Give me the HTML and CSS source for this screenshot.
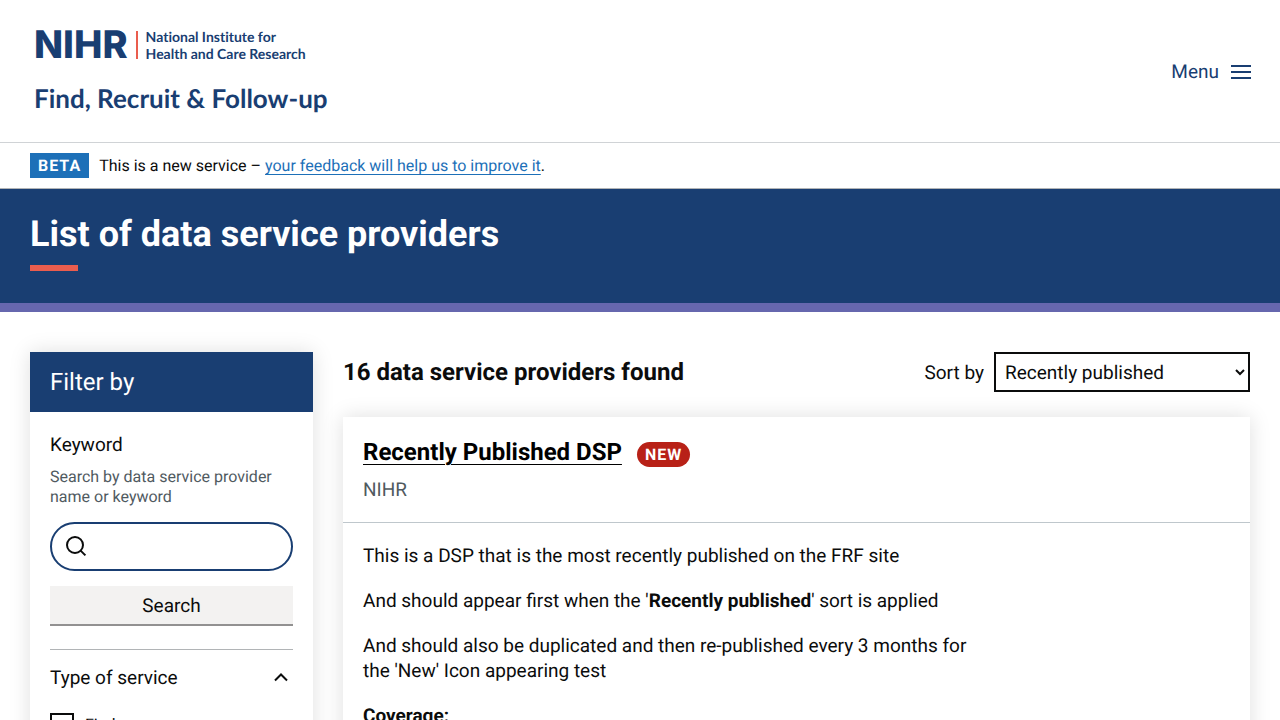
FILE: index.html
```html
<!DOCTYPE html>
<html lang="en">
<head>
<meta charset="utf-8">
<meta name="viewport" content="width=device-width, initial-scale=1">
<title>List of data service providers</title>
<link rel="stylesheet" href="styles.css">
</head>
<body>
<header class="header">
  <div class="brand">
    <div class="logo">
      <span class="logo-mark">NIHR</span>
      <span class="logo-rule"></span>
      <span class="logo-name">National Institute for<br>Health and Care Research</span>
    </div>
    <div class="service-name">Find, Recruit &amp; Follow-up</div>
  </div>
  <button class="menu-button" type="button">Menu
    <svg class="menu-icon" viewBox="0 0 20 14" width="20" height="14" aria-hidden="true"><path d="M0 1h20M0 7h20M0 13h20" stroke="currentColor" stroke-width="2"/></svg>
  </button>
</header>
<div class="phase-banner">
  <strong class="tag">BETA</strong>
  <span>This is a new service – <a class="link" href="#feedback">your feedback will help us to improve it</a>.</span>
</div>
<div class="hero">
  <h1 class="hero-title">List of data service providers</h1>
</div>
<main class="layout">
  <form class="filter">
    <h2 class="filter-title">Filter by</h2>
    <div class="filter-body">
      <label class="filter-label" for="keyword">Keyword</label>
      <p class="hint" id="keyword-hint">Search by data service provider name or keyword</p>
      <div class="search-box">
        <svg class="search-icon" viewBox="0 0 22 22" width="22" height="22" aria-hidden="true"><g fill="none" stroke="currentColor" stroke-width="2"><circle cx="9" cy="9" r="8"/><path d="M14.6 14.6l4.8 4.8"/></g></svg>
        <input class="search-input" id="keyword" type="text" aria-describedby="keyword-hint">
      </div>
      <button class="search-button" type="button">Search</button>
      <button class="section-toggle" type="button" aria-expanded="true">Type of service
        <svg viewBox="0 0 14 10" width="14" height="10" aria-hidden="true"><path d="M1 7.5l6-6 6 6" fill="none" stroke="currentColor" stroke-width="2"/></svg>
      </button>
      <div class="option">
        <input class="checkbox" type="checkbox" id="type-find">
        <label for="type-find">Find</label>
      </div>
    </div>
  </form>
  <section class="results">
    <div class="results-head">
      <h2 class="results-count">16 data service providers found</h2>
      <div class="sort">
        <label for="sort">Sort by</label>
        <select class="sort-select" id="sort"><option>Recently published</option></select>
      </div>
    </div>
    <article class="card">
      <div class="card-head">
        <div class="card-heading">
          <h3 class="card-title"><a class="card-link" href="#dsp">Recently Published DSP</a></h3>
          <strong class="badge">NEW</strong>
        </div>
        <p class="card-org">NIHR</p>
      </div>
      <div class="card-body">
        <p>This is a DSP that is the most recently published on the FRF site</p>
        <p>And should appear first when the '<strong>Recently published</strong>' sort is applied</p>
        <p>And should also be duplicated and then re-published every 3 months for the 'New' Icon appearing test</p>
        <p><strong>Coverage:</strong></p>
      </div>
    </article>
  </section>
</main>
</body>
</html>
```

FILE: styles.css
```css
*, *::before, *::after { box-sizing: border-box; }
body, h1, h2, h3, p { margin: 0; }
body {
  font-family: Roboto, "Liberation Sans", sans-serif;
  font-size: 19px;
  line-height: 25px;
  color: #0b0c0c;
  background: #fff;
  text-rendering: geometricPrecision;
}
button, input, select { font: inherit; color: inherit; text-rendering: inherit; }

.header {
  display: flex;
  justify-content: space-between;
  align-items: center;
  padding: 25px 29px 27px 34px;
  border-bottom: 1px solid #d0d3d6;
  color: #193e72;
}
.brand {
  display: grid;
  gap: 16px;
  font-family: Lato, sans-serif;
  font-weight: 700;
  font-variant-ligatures: none;
}
.logo { display: flex; align-items: center; }
.logo-mark {
  font-family: Inter, sans-serif;
  font-size: 38px;
  font-weight: 800;
  line-height: 40px;
}
.logo-rule { width: 2px; height: 28px; margin: 0 8px; background: #ea5d4e; }
.logo-name { font-size: 14px; line-height: 17px; }
.service-name { font-size: 26px; line-height: 34px; }
.menu-button {
  display: flex;
  align-items: center;
  gap: 12px;
  padding: 3px 0 0;
  border: 0;
  background: none;
}
.menu-icon { display: block; }

.phase-banner {
  display: flex;
  align-items: center;
  gap: 10px;
  padding: 10px 30px;
  border-bottom: 1px solid #b1b4b6;
  font-size: 16px;
}
.tag, .badge {
  padding: 0 8px;
  color: #fff;
  font-size: 16px;
  letter-spacing: 1px;
}
.tag { background: #1d70b8; }
.link {
  color: #1d70b8;
  text-decoration-thickness: 1px;
  text-underline-offset: 3px;
}

.hero {
  padding: 24px 30px 32px;
  border-bottom: 9px solid #6667ae;
  background: #193e72;
  color: #fff;
}
.hero-title { font-size: 36px; line-height: 42px; }
.hero-title::after {
  content: "";
  display: block;
  width: 48px;
  height: 6px;
  margin-top: 10px;
  background: #ea5d4e;
}

.layout {
  display: grid;
  grid-template-columns: 283px 1fr;
  gap: 30px;
  padding: 40px 30px;
}
.filter, .card { box-shadow: 0 0 20px rgba(0, 0, 0, 0.13); }
.filter-title {
  padding: 15px 20px;
  background: #193e72;
  color: #fff;
  font-size: 24px;
  font-weight: 400;
  line-height: 30px;
}
.filter-body { padding: 20px; }
.filter-label { display: block; margin-bottom: 10px; }
.hint {
  margin-bottom: 15px;
  color: #505a5f;
  font-size: 16px;
  line-height: 20px;
}
.search-box {
  display: flex;
  align-items: center;
  height: 49px;
  padding: 0 14px;
  border: 2px solid #193e72;
  border-radius: 25px;
}
.search-icon { flex: none; }
.search-input {
  flex: 1;
  min-width: 0;
  padding: 0 8px;
  border: 0;
  outline: 0;
  background: none;
}
.search-button {
  display: block;
  width: 100%;
  height: 40px;
  margin: 15px 0 23px;
  border: 0;
  border-bottom: 2px solid #929191;
  background: #f3f2f1;
}
.section-toggle {
  display: flex;
  justify-content: space-between;
  align-items: center;
  width: 100%;
  padding: 15px 5px 15px 0;
  border: 0;
  border-top: 1px solid #b1b4b6;
  background: none;
}
.option {
  display: flex;
  align-items: center;
  gap: 11px;
  padding-top: 7px;
  font-size: 16px;
}
.checkbox {
  appearance: none;
  width: 24px;
  height: 24px;
  margin: 0;
  border: 2px solid #0b0c0c;
}
.checkbox:checked { background: #0b0c0c; }

.results-head {
  display: flex;
  justify-content: space-between;
  align-items: center;
  margin-bottom: 25px;
}
.results-count { font-size: 24px; line-height: 30px; }
.sort { display: flex; align-items: center; gap: 10px; }
.sort-select {
  width: 256px;
  height: 40px;
  padding: 5px;
  border: 2px solid #0b0c0c;
  border-radius: 0;
  background: #fff;
}
.card-head { padding: 20px; border-bottom: 1px solid #bfc7cc; }
.card-heading { display: flex; align-items: center; gap: 15px; }
.card-title { font-size: 24px; line-height: 30px; }
.card-link {
  color: #000;
  text-decoration-thickness: 1px;
  text-underline-offset: 4px;
}
.badge { margin-top: 5px; border-radius: 13px; background: #b82117; }
.card-org { margin-top: 10px; color: #505a5f; }
.card-body {
  display: grid;
  gap: 20px;
  max-width: 660px;
  padding: 20px;
}
```
